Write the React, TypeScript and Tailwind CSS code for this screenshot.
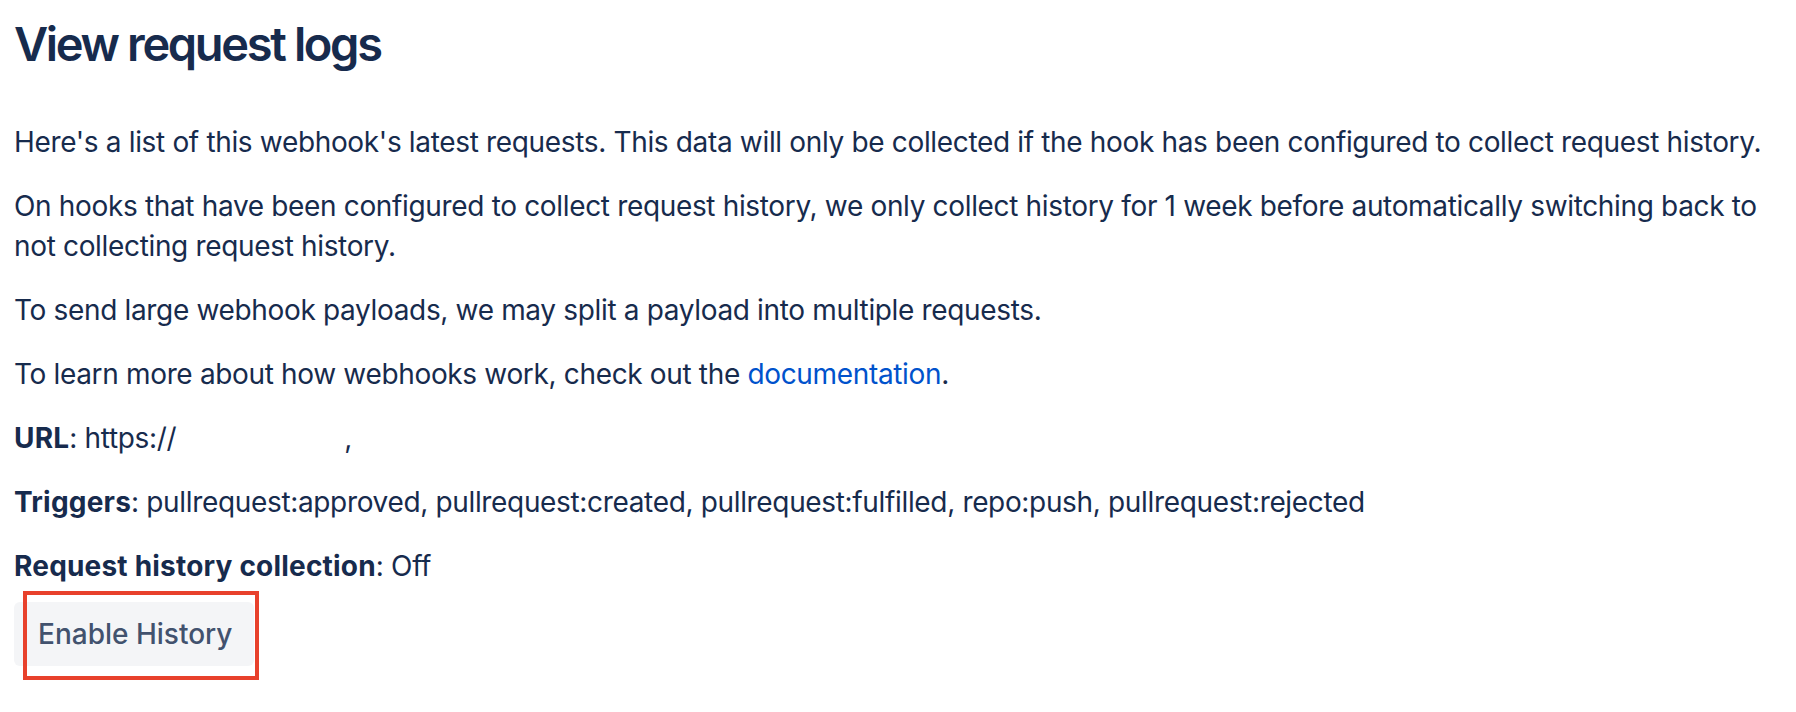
export default function App() {
  return (
    <div className="min-h-[712px] bg-white pl-[14px] text-[#172B4D] [font-family:Inter,'Liberation_Sans',sans-serif]">
      <h2 className="pt-[16px] text-[47px] leading-[56px] font-semibold tracking-[-0.05em]">
        View request logs
      </h2>

      <div className="text-[28px] leading-[40px] tracking-[-0.34px]">
        <p className="mt-[50px]">
          Here's a list of this webhook's latest requests. This data will only be
          collected if the hook has been configured to collect request history.
        </p>
        <p className="mt-6 max-w-[1760px]">
          On hooks that have been configured to collect request history, we only
          collect history for 1 week before automatically switching back to not
          collecting request history.
        </p>
        <p className="mt-6">
          To send large webhook payloads, we may split a payload into multiple
          requests.
        </p>
        <p className="mt-6">
          To learn more about how webhooks work, check out the{" "}
          <a href="#" className="text-[#0052CC]">
            documentation
          </a>
          .
        </p>
        <p className="mt-6">
          <strong className="font-bold tracking-[0.2px]">URL</strong>: https://
          <span className="inline-block w-[168px]" />,
        </p>
        <p className="mt-6">
          <strong className="font-bold tracking-[0.2px]">Triggers</strong>:
          pullrequest:approved, pullrequest:created, pullrequest:fulfilled,
          repo:push, pullrequest:rejected
        </p>
        <p className="mt-6">
          <strong className="font-bold tracking-[0.2px]">
            Request history collection
          </strong>
          : Off
        </p>
      </div>

      <div className="relative mt-4 w-[240px]">
        <button className="flex h-[64px] w-[240px] items-center rounded-[6px] bg-[#F4F5F7] pl-[24px] text-[28px] font-medium text-[#42526E]">
          Enable History
        </button>
        <div className="pointer-events-none absolute top-[-11px] left-[9px] h-[89px] w-[236px] border-4 border-[#E8412C]" />
      </div>
    </div>
  );
}
